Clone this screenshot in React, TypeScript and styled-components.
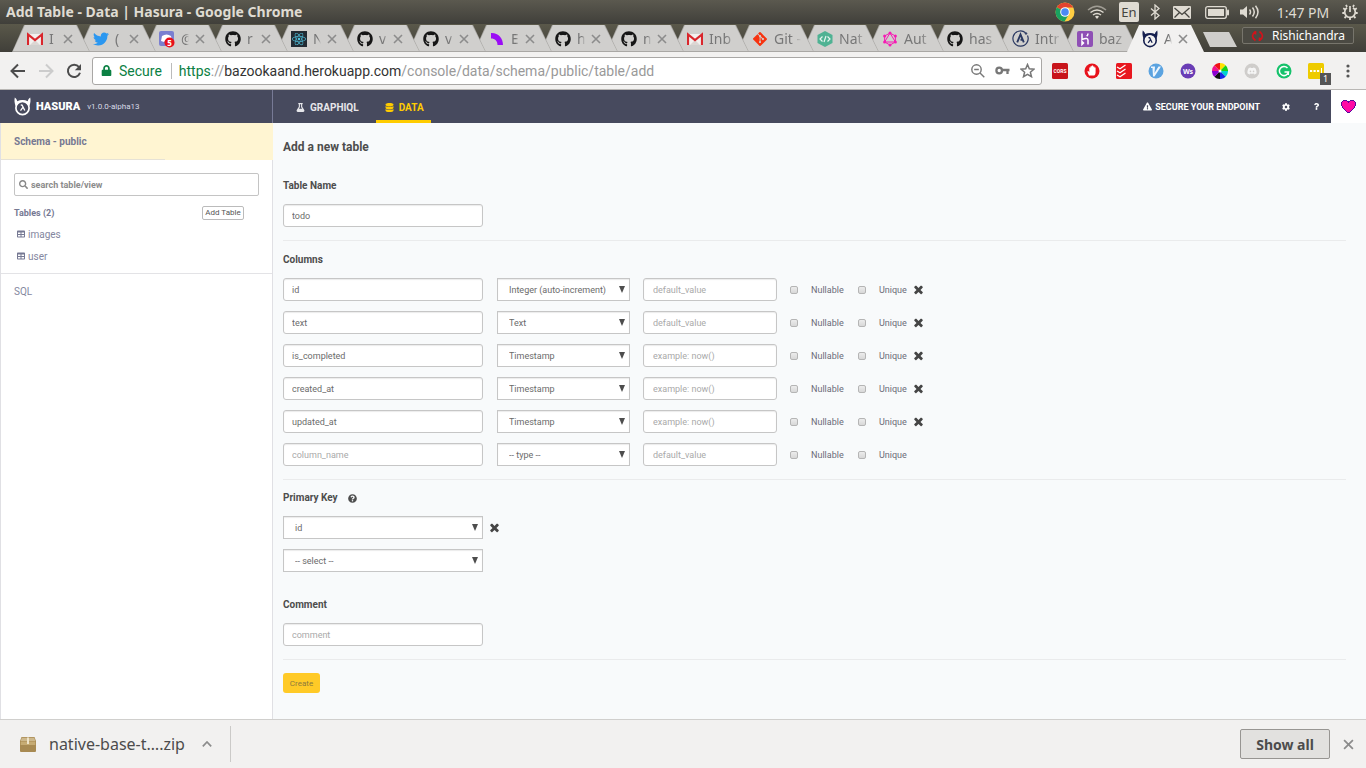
import React from "react";
import styled, { createGlobalStyle, css } from "styled-components";
import {
  FaCog,
  FaDatabase,
  FaDiscord,
  FaExclamationTriangle,
  FaFlask,
  FaGitAlt,
  FaGithub,
  FaLock,
  FaQuestion,
  FaQuestionCircle,
  FaReact,
  FaSearch,
  FaTable,
  FaTwitter,
} from "react-icons/fa";

const pageFont = `Roboto, "Noto Sans", sans-serif`;
const desktopFont = `"Noto Sans", "Open Sans", sans-serif`;

const GlobalStyle = createGlobalStyle`
  *, *::before, *::after { box-sizing: border-box; }
  body { margin: 0; font-family: ${pageFont}; color: #4d4d4d; background: #f8fafb; }
  button, input, select { font-family: inherit; margin: 0; }
  svg { display: block; flex: none; }
  h1, h2, p { margin: 0; }
`;

const Screen = styled.div`
  min-height: 100vh;
  display: flex;
  flex-direction: column;
`;

/* ---------- desktop title bar ---------- */

const TitleBar = styled.header`
  height: 24px;
  display: flex;
  align-items: center;
  padding: 0 7px 0 6px;
  background: linear-gradient(#5b594f, #403f3a);
  color: #dfdbd2;
  font-family: ${desktopFont};
`;

const WindowTitle = styled.p`
  flex: 1;
  font-size: 14px;
  font-weight: 700;
  line-height: 24px;
  white-space: nowrap;
`;

const TraySlot = styled.div<{ $w: number }>`
  width: ${(p) => p.$w}px;
  display: flex;
  justify-content: center;
  font-size: 14px;
  white-space: nowrap;
`;

const Language = styled.span`
  width: 20px;
  height: 20px;
  border-radius: 2px;
  background: #dfdbd2;
  color: #45443f;
  font-size: 13px;
  line-height: 20px;
  text-align: center;
`;

/* ---------- browser tabs ---------- */

const TabStrip = styled.nav`
  height: 28px;
  display: flex;
  align-items: flex-end;
  padding: 0 12px;
  background: linear-gradient(#5a584a, #403f39);
  font-family: ${desktopFont};
`;

const slanted = css`
  clip-path: polygon(0 100%, 12px 0, calc(100% - 13px) 0, 100% 100%);
`;

const TabShape = styled.div<{ $active?: boolean; $wide?: boolean; $order: number }>`
  ${slanted}
  position: relative;
  z-index: ${(p) => (p.$active ? 30 : 20 - p.$order)};
  flex: 0 1 ${(p) => (p.$wide ? 78 : 77)}px;
  min-width: 0;
  margin-right: -12px;
  height: 27px;
  display: flex;
  align-items: center;
  gap: 6px;
  padding: 0 12px 0 15px;
  background: ${(p) => (p.$active ? "#f2f1f0" : "#a9a7a4")};
  &::before {
    ${slanted}
    content: "";
    position: absolute;
    inset: 0 1px 1px 1px;
    z-index: -1;
    background: ${(p) => (p.$active ? "#f2f1f0" : "#d0cfcd")};
  }
`;

const TabName = styled.span<{ $short?: boolean }>`
  flex: ${(p) => (p.$short ? "0 0 8px" : "1 1 0")};
  min-width: 0;
  overflow: hidden;
  color: #777;
  font-size: 14px;
  line-height: 20px;
  white-space: nowrap;
  mask-image: linear-gradient(to right, #000 60%, transparent);
`;

const GhostButton = styled.button`
  display: flex;
  align-items: center;
  justify-content: center;
  padding: 0;
  border: 0;
  background: none;
  color: inherit;
`;

const NewTab = styled.button`
  width: 34px;
  height: 15px;
  margin: 0 0 5px 11px;
  padding: 0;
  border: 0;
  background: #cfcecb;
  clip-path: polygon(0 0, 26px 0, 100% 100%, 7px 100%);
`;

const Profile = styled.button`
  width: 112px;
  height: 17px;
  margin: 0 0 8px auto;
  display: flex;
  align-items: center;
  justify-content: space-between;
  padding: 0 8px;
  border: 1px solid #77756c;
  border-radius: 2px;
  background: #4b4a43;
  color: #fff;
  font-size: 12px;
  line-height: 15px;
`;

/* ---------- browser toolbar ---------- */

const Toolbar = styled.div`
  height: 38px;
  display: flex;
  align-items: center;
  padding: 0 2px 0 4px;
  border-bottom: 1px solid #b9b7b4;
  background: #f2f1f0;
  font-family: ${desktopFont};
`;

const ToolButton = styled(GhostButton)<{ $w: number; $color?: string }>`
  position: relative;
  width: ${(p) => p.$w}px;
  height: 28px;
  color: ${(p) => p.$color || "#4c4c4c"};
`;

const AddressBox = styled.div`
  flex: 1;
  height: 28px;
  margin: 0 2px 0 4px;
  display: flex;
  align-items: center;
  padding: 0 1px 0 8px;
  border: 1px solid #a9a7a5;
  border-radius: 3px;
  background: #fff;
  font-family: ${pageFont};
  font-size: 14px;
  white-space: nowrap;
`;

const Secure = styled.span`
  display: flex;
  align-items: center;
  gap: 7px;
  padding-right: 9px;
  margin-right: 7px;
  border-right: 1px solid #bbb;
  color: #0b8043;
  line-height: 16px;
`;

const Url = styled.span`
  flex: 1;
  color: #333;
  i { font-style: normal; color: #999; }
  b { font-weight: 400; color: #0b8043; }
`;

const CountBadge = styled.span`
  position: absolute;
  right: 1px;
  bottom: 0;
  width: 11px;
  height: 12px;
  background: #555;
  color: #fff;
  font-size: 9px;
  line-height: 12px;
`;

/* ---------- console header ---------- */

const ConsoleHeader = styled.header`
  height: 33px;
  display: flex;
  background: #474a5e;
  color: #fff;
`;

const Brand = styled.a`
  width: 273px;
  display: flex;
  align-items: center;
  padding-left: 14px;
  border-right: 1px solid #777a96;
  color: #fff;
  text-decoration: none;
`;

const BrandName = styled.span`
  margin: 0 7px 0 5px;
  font-size: 11px;
  font-weight: 900;
`;

const Version = styled.span`
  font-size: 8px;
  color: #d8dae6;
`;

const NavLinks = styled.nav`
  flex: 1;
  display: flex;
  gap: 10px;
  padding-left: 14px;
`;

const NavLink = styled.a<{ $active?: boolean }>`
  display: flex;
  align-items: center;
  gap: 5px;
  padding: 4px 7px 0 9px;
  border-bottom: 3px solid ${(p) => (p.$active ? "#fc0" : "transparent")};
  color: ${(p) => (p.$active ? "#fc0" : "#e6e6ea")};
  font-size: 10px;
  font-weight: 700;
  text-decoration: none;
`;

const HeaderAction = styled.a<{ $w?: number }>`
  ${(p) => p.$w && `width: ${p.$w}px;`}
  display: flex;
  align-items: center;
  justify-content: center;
  gap: 3px;
  padding-right: ${(p) => (p.$w ? 0 : 10)}px;
  color: #fff;
  font-size: 9px;
  font-weight: 700;
  text-decoration: none;
`;

const Love = styled(GhostButton)`
  width: 35px;
  background: #fff;
`;

/* ---------- sidebar ---------- */

const Body = styled.div`
  flex: 1;
  display: flex;
`;

const Sidebar = styled.aside`
  width: 273px;
  flex: none;
  border: solid #e0e0e4;
  border-width: 0 1px;
  background: #fff;
  color: #767993;
`;

const SchemaLink = styled.a`
  height: 37px;
  display: flex;
  align-items: center;
  padding-left: 13px;
  margin-right: -1px;
  background:
    linear-gradient(#e6e2d6, #e6e2d6) 0 100% / 164px 1px no-repeat,
    #fff5d2;
  color: inherit;
  font-size: 10px;
  font-weight: 700;
  text-decoration: none;
`;

const TableSection = styled.section`
  padding: 13px 13px 6px;
  border-bottom: 1px solid #e3e3e6;
`;

const SearchBox = styled.label`
  height: 23px;
  display: flex;
  align-items: center;
  gap: 3px;
  padding: 0 4px;
  border: 1px solid #c4c4c4;
  border-radius: 2px;
  color: #888;
`;

const SearchInput = styled.input`
  flex: 1;
  min-width: 0;
  padding: 0;
  border: 0;
  outline: 0;
  background: none;
  font-size: 9px;
  font-weight: 700;
  &::placeholder { color: #8b8b8b; }
`;

const TablesHead = styled.div`
  display: flex;
  align-items: center;
  justify-content: space-between;
  padding: 10px 15px 0 0;
  font-size: 9px;
  line-height: 12px;
  font-weight: 700;
`;

const AddTable = styled.button`
  height: 14px;
  width: 42px;
  padding: 0;
  border: 1px solid #bbb;
  border-radius: 2px;
  background: #fff;
  color: #555;
  font-size: 8px;
  line-height: 12px;
`;

const TableList = styled.ul`
  margin: 3px 0 0;
  padding: 0 0 0 3px;
  list-style: none;
`;

const TableLink = styled.a`
  height: 22px;
  display: flex;
  align-items: center;
  gap: 3px;
  color: #8487a0;
  font-size: 10px;
  text-decoration: none;
  svg { color: #767993; }
`;

const SqlLink = styled(TableLink)`
  height: 35px;
  padding-left: 13px;
`;

/* ---------- form ---------- */

const Main = styled.main`
  flex: 1;
  min-width: 0;
  padding: 16px 20px 26px 10px;
  background: #f8fafb;
`;

const PageTitle = styled.h1`
  font-size: 12px;
  line-height: 16px;
`;

const Label = styled.h2<{ $top: number }>`
  display: flex;
  align-items: center;
  gap: 10px;
  margin: ${(p) => p.$top}px 0 11px;
  font-size: 10px;
  line-height: 14px;
`;

const Rule = styled.hr`
  margin: 13px 0 0;
  border: 0;
  border-top: 1px solid #eaebec;
`;

const Rows = styled.div`
  display: flex;
  flex-direction: column;
  gap: 10px;
`;

const Row = styled.div`
  display: flex;
  align-items: center;
`;

const field = css`
  height: 23px;
  border: 1px solid #c6c6c6;
  background: #fff;
  box-shadow: inset 0 1px 1px #ececec;
  color: #6b6b6b;
  font-size: 9px;
`;

const TextInput = styled.input<{ $w: number }>`
  ${field}
  width: ${(p) => p.$w}px;
  padding: 0 8px;
  border-radius: 3px;
  &::placeholder { color: #a9a9a9; }
`;

const DefaultInput = styled(TextInput)`
  margin: 0 13px;
  padding: 0 9px;
`;

const SelectFrame = styled.span<{ $w: number }>`
  position: relative;
  width: ${(p) => p.$w}px;
  &::after {
    content: "";
    position: absolute;
    top: 8px;
    right: 5px;
    border: solid transparent;
    border-width: 7px 3px 0;
    border-top-color: #4d4d4d;
    pointer-events: none;
  }
`;

const TypeFrame = styled(SelectFrame)`
  margin-left: 14px;
`;

const Select = styled.select`
  ${field}
  display: block;
  width: 100%;
  padding: 0 11px;
  border-radius: 0;
  appearance: none;
`;

const Check = styled.label<{ $w: number }>`
  width: ${(p) => p.$w}px;
  display: flex;
  align-items: center;
  gap: 13px;
  color: #6b6b78;
  font-size: 9px;
  line-height: 14px;
`;

const Tick = styled.input`
  width: 8px;
  height: 8px;
  appearance: none;
  border: 1px solid #b5b5b5;
  border-radius: 2px;
  background: linear-gradient(#ececec, #d8d8d8);
`;

const RemoveKey = styled(GhostButton)`
  margin-left: 5px;
`;

const CreateButton = styled.button`
  height: 20px;
  width: 37px;
  margin-top: 13px;
  padding: 0;
  border: 0;
  border-radius: 3px;
  background: #ffca27;
  color: #8d7a3d;
  font-size: 8px;
`;

/* ---------- download shelf ---------- */

const Shelf = styled.footer`
  height: 49px;
  display: flex;
  align-items: center;
  padding: 0 12px 0 20px;
  border-top: 1px solid #d0cfcd;
  background: #f2f1f0;
  color: #4c4c4c;
  font-family: ${desktopFont};
`;

const Download = styled.div`
  height: 36px;
  width: 211px;
  display: flex;
  align-items: center;
  gap: 13px;
  border-right: 1px solid #cbcac8;
  font-size: 16px;
`;

const FileName = styled.span`
  flex: 0 0 140px;
  white-space: nowrap;
`;

const ShowAll = styled.button`
  height: 30px;
  width: 90px;
  margin: 0 13px 0 auto;
  border: 1px solid #979592;
  border-radius: 2px;
  background: #e2e1df;
  color: #4c4c4c;
  font-size: 14px;
  font-weight: 700;
`;

/* ---------- drawings ---------- */

const Cross = ({ size = 10, color = "#8c8c8c" }: { size?: number; color?: string }) => (
  <svg width={size} height={size} viewBox="0 0 10 10">
    <path d="M1 1l8 8M9 1L1 9" stroke={color} strokeWidth="1.6" />
  </svg>
);

const BoldCross = () => (
  <svg width="13" height="13" viewBox="0 0 1792 1792" fill="#454545">
    <path d="M1490 1322q0 40-28 68l-136 136q-28 28-68 28t-68-28l-294-294-294 294q-28 28-68 28t-68-28l-136-136q-28-28-28-68t28-68l294-294-294-294q-28-28-28-68t28-68l136-136q28-28 68-28t68 28l294 294 294-294q28-28 68-28t68 28l136 136q28 28 28 68t-28 68l-294 294 294 294q28 28 28 68z" />
  </svg>
);

const HasuraMark = ({ color, w = 17, h = 19 }: { color: string; w?: number; h?: number }) => (
  <svg width={w} height={h} viewBox="0 0 17 19" fill="none" stroke={color}>
    <circle cx="8.5" cy="11" r="6.6" strokeWidth="1.7" />
    <path d="M1.800 9.500C.4 6.500.2 3.200.8.6c1.300.9 2 2 2.500 3.600q2.200-1.200 5.200-1.200t5.200 1.200C14.200 2.600 14.900 1.500 16.200.6c.6 2.600.4 5.900-1 8.900L12.500 6.200Q8.500 3.800 4.500 6.200z" fill={color} stroke="none" />
    <path d="M6.800 8l1.300.1 2.700 5.400M8.900 10.400l-2.400 3.200" strokeWidth="1.300" />
  </svg>
);

const Gmail = () => (
  <svg width="16" height="16" viewBox="0 0 16 16">
    <path d="M1 3h14v11H1z" fill="#f3f0ee" />
    <path d="M3 14l5-5 5 5z" fill="#dcd6d3" />
    <path d="M1 14V3.500L8 9l7-5.500V14" fill="none" stroke="#d9262c" strokeWidth="2.200" />
  </svg>
);

const Discord = () => (
  <svg width="16" height="18" viewBox="0 0 16 18">
    <rect width="15" height="15" y="1" rx="2" fill="#7a7fd0" />
    <path d="M3 6q4.500-3 9 0l1 5-3 1-1-1H6l-1 1-3-1z" fill="#fff" />
    <circle cx="10.500" cy="12.500" r="5" fill="#e8101a" />
    <text x="10.500" y="15.500" textAnchor="middle" fontSize="8" fontWeight="700" fill="#fff">5</text>
  </svg>
);

const ReactTile = () => (
  <svg width="16" height="16" viewBox="0 0 16 16">
    <path d="M0 0h16v16H0z" fill="#222b33" />
    <FaReact x="1" y="1" size={14} color="#4fc0dc" />
  </svg>
);

const PurpleArc = () => (
  <svg width="16" height="16" viewBox="0 0 16 16">
    <path d="M2 2c7-.5 12 5 12 12H8.500c0-4-2.500-6.500-6.500-6.500z" fill="#9b0df5" />
  </svg>
);

const NativeBase = () => (
  <svg width="16" height="16" viewBox="0 0 16 16">
    <path d="M8 0l7.500 4v8L8 16 .5 12V4z" fill="#4fb293" />
    <path d="M5.500 5.500L3 8l2.500 2.500M10.500 5.500L13 8l-2.500 2.500M9 5l-2 6" fill="none" stroke="#e6f5ef" strokeWidth="1.200" />
  </svg>
);

const GraphQL = () => (
  <svg width="16" height="16" viewBox="0 0 16 16" fill="none" stroke="#f51bb4" strokeWidth="1">
    <path d="M8 2l5.400 3v6L8 14l-5.400-3V5zM8 2l5.400 9H2.600z" />
    <g fill="#f51bb4" stroke="none">
      <circle cx="8" cy="2" r="1.500" /><circle cx="13.400" cy="5" r="1.500" /><circle cx="13.400" cy="11" r="1.500" />
      <circle cx="8" cy="14" r="1.500" /><circle cx="2.600" cy="11" r="1.500" /><circle cx="2.600" cy="5" r="1.500" />
    </g>
  </svg>
);

const Apollo = () => (
  <svg width="17" height="17" viewBox="0 0 17 17" fill="none" stroke="#2a3861">
    <path d="M13.500 2.800A7.600 7.600 0 1 0 15.500 5.500" strokeWidth="1.200" />
    <path d="M5.200 12.300L8.500 4.500l3.300 7.800M8.500 9.800h2" strokeWidth="1.900" />
    <circle cx="14" cy="3.500" r=".8" fill="#2a3861" />
  </svg>
);

const Heroku = () => (
  <svg width="16" height="16" viewBox="0 0 16 16">
    <rect width="16" height="16" rx="2" fill="#8f50b5" />
    <path d="M5 2.500v6c4-1.800 6-1.300 6 .8v4.200M5 10.500v3l1.500-1.500zM11 2.500q0 1.500-1.300 2.800" fill="none" stroke="#fff" strokeWidth="1.500" />
  </svg>
);

const ChromeBall = () => (
  <svg width="20" height="20" viewBox="0 0 20 20">
    <circle cx="10" cy="10" r="9.500" fill="#ffcd42" />
    <path d="M10 10L1.800 5.200A9.500 9.500 0 0 1 18.200 5.500H10z" fill="#e2432f" />
    <path d="M10 10L1.800 5.200A9.500 9.500 0 0 0 9.500 19.500L13.500 13z" fill="#1aa260" />
    <circle cx="10" cy="10" r="4.800" fill="#fff" />
    <circle cx="10" cy="10" r="3.800" fill="#4a8af4" />
  </svg>
);

const Wifi = () => (
  <svg width="20" height="14" viewBox="0 0 20 14" fill="none" stroke="#dfdbd2" strokeWidth="1.500">
    <path d="M1 5q9-7.500 18 0" opacity=".55" /><path d="M3.500 7.500q6.500-5 13 0M6 10q4-3 8 0" />
    <path d="M8 11.500L10 14l2-2.500q-2-1.500-4 0z" fill="#dfdbd2" stroke="none" />
  </svg>
);

const Bluetooth = () => (
  <svg width="10" height="16" viewBox="0 0 10 16" fill="none" stroke="#dfdbd2" strokeWidth="1.300">
    <path d="M1 4.500l8 7L5 15V1l4 3.500-8 7" />
  </svg>
);

const Mail = () => (
  <svg width="18" height="13" viewBox="0 0 18 13">
    <rect width="18" height="13" rx="1" fill="#dfdbd2" />
    <path d="M1.500 2L9 8.500 16.500 2M1.500 11.500l5-5M16.500 11.500l-5-5" fill="none" stroke="#45443f" strokeWidth="1.300" />
  </svg>
);

const Battery = () => (
  <svg width="24" height="13" viewBox="0 0 24 13">
    <rect x=".7" y=".7" width="20.600" height="11.600" rx="2" fill="none" stroke="#dfdbd2" strokeWidth="1.300" />
    <rect x="3" y="3" width="16" height="7" fill="#dfdbd2" /><rect x="22" y="3.500" width="2" height="6" rx="1" fill="#dfdbd2" />
  </svg>
);

const Volume = () => (
  <svg width="20" height="14" viewBox="0 0 20 14" fill="none" stroke="#dfdbd2" strokeWidth="1.500">
    <path d="M0 4.500h3L7 1v12L3 9.500H0z" fill="#dfdbd2" stroke="none" />
    <path d="M9.500 4.500q2 2.500 0 5M12.500 2.500q3.500 4.500 0 9M15.500.8q5 6.200 0 12.400" />
  </svg>
);

const PowerGear = () => (
  <svg width="16" height="16" viewBox="0 0 16 16" fill="none" stroke="#dfdbd2">
    <path d="M5 3.700a5.300 5.300 0 1 0 6 0M8 2v6" strokeWidth="1.700" />
    <path d="M1.200 4.200l2 1.200M14.800 4.200l-2 1.200M.3 9h2M15.700 9h-2M2.500 14l1.500-1.500M13.500 14L12 12.500M8 16v-2M4 .8l1 2M12 .8l-1 2" strokeWidth="1.800" />
  </svg>
);

const Arrow = ({ flip }: { flip?: boolean }) => (
  <svg width="16" height="16" viewBox="0 0 16 16" fill="none" stroke="currentColor" strokeWidth="2">
    <path d={flip ? "M1 8h13M8 1.500L14.500 8 8 14.500" : "M15 8H2M8 1.500L1.500 8 8 14.500"} />
  </svg>
);

const Reload = () => (
  <svg width="16" height="16" viewBox="0 0 16 16" fill="none" stroke="currentColor" strokeWidth="2">
    <path d="M13 4A6.200 6.200 0 1 0 14 9.800" /><path d="M15 1v6.200H8.800z" fill="currentColor" stroke="none" />
  </svg>
);

const ZoomOut = () => (
  <svg width="14" height="14" viewBox="0 0 14 14" fill="none" stroke="currentColor" strokeWidth="1.400">
    <circle cx="5.500" cy="5.500" r="4.700" /><path d="M3.200 5.500h4.600M9 9l4.300 4.300" />
  </svg>
);

const Key = () => (
  <svg width="15" height="9" viewBox="0 0 15 9" fill="none" stroke="currentColor">
    <circle cx="4.200" cy="4.500" r="2.800" strokeWidth="2.300" /><path d="M7 4h7.500M12.500 4v4" strokeWidth="2.300" />
  </svg>
);

const Star = () => (
  <svg width="15" height="15" viewBox="0 0 15 15" fill="none" stroke="currentColor" strokeWidth="1.500">
    <path d="M7.500 1.500l1.800 4.300 4.600.4-3.500 3 1.100 4.500-4-2.400-4 2.400 1.100-4.500-3.500-3 4.600-.4z" />
  </svg>
);

const Tile = ({ color, children }: { color: string; children?: React.ReactNode }) => (
  <svg width="16" height="16" viewBox="0 0 16 16">
    <rect width="16" height="16" rx="1.500" fill={color} />
    {children}
  </svg>
);

const Disc = ({ color, children }: { color: string; children?: React.ReactNode }) => (
  <svg width="16" height="16" viewBox="0 0 16 16">
    <circle cx="8" cy="8" r="7.500" fill={color} />
    {children}
  </svg>
);

const wheel = ["#ffe100", "#19d219", "#00d2d2", "#1428e6", "#111", "#8c00d2", "#f0148c", "#f01414"];

const ColorWheel = () => (
  <svg width="16" height="16" viewBox="-8 -8 16 16">
    {wheel.map((c, i) => (
      <path key={c} d="M0 0V-8A8 8 0 0 1 5.700-5.700z" fill={c} transform={`rotate(${i * 45})`} />
    ))}
    <circle r="1.500" fill="#fff" />
  </svg>
);

const Heart = () => (
  <svg width="15" height="13" viewBox="0 0 15 13" shapeRendering="crispEdges">
    <path d="M2 0h4v1h3V0h4v1h1v1h1v4h-1v2h-1v1h-1v1h-1v1h-1v1H9v1H6v-1H5v-1H4v-1H3V9H2V8H1V6H0V2h1V1h1z" fill="#5a0a9c" />
    <path d="M2 1h4v1h1v1h1V2h1V1h4v1h1v4h-1v2h-1v1h-1v1h-1v1H9v1H6v-1H5v-1H4V9H3V8H2V6H1V2h1z" fill="#ff0aa5" />
  </svg>
);

const Package = () => (
  <svg width="16" height="15" viewBox="0 0 16 15">
    <path d="M1.500 0h13L16 4v10q0 1-1 1H1q-1 0-1-1V4z" fill="#a88a52" />
    <path d="M1.800.8h12.400L15.300 4H.7z" fill="#cdb88c" /><path d="M.7 4.500h14.600V8H.7z" fill="#c6ab73" />
    <path d="M7 .5h2V7H7z" fill="#eee3c9" />
  </svg>
);

const Caret = () => (
  <svg width="10" height="6" viewBox="0 0 10 6" fill="none" stroke="#8c8c8c" strokeWidth="1.700">
    <path d="M.8 5.300L5 1l4.200 4.300" />
  </svg>
);

/* ---------- data ---------- */

const octocat = <FaGithub size={16} color="#161616" />;

const tabs = [
  { icon: <Gmail />, name: "I", closable: true },
  { icon: <FaTwitter size={16} color="#2b97f0" />, name: "(", closable: true },
  { icon: <Discord />, name: "@", closable: true },
  { icon: octocat, name: "r", closable: true },
  { icon: <ReactTile />, name: "N", closable: true },
  { icon: octocat, name: "v", closable: true },
  { icon: octocat, name: "v", closable: true },
  { icon: <PurpleArc />, name: "E", closable: true },
  { icon: octocat, name: "h", closable: true },
  { icon: octocat, name: "n", closable: true },
  { icon: <Gmail />, name: "Inb" },
  { icon: <FaGitAlt size={16} color="#f7330f" />, name: "Git -" },
  { icon: <NativeBase />, name: "Nat" },
  { icon: <GraphQL />, name: "Aut" },
  { icon: octocat, name: "has" },
  { icon: <Apollo />, name: "Intr" },
  { icon: <Heroku />, name: "baz" },
  { icon: <HasuraMark color="#16204f" w={16} h={18} />, name: "A", closable: true, active: true },
];

const extensions = [
  { name: "CORS", icon: <Tile color="#c8141b"><text x="8" y="10" textAnchor="middle" fontFamily="Roboto" fontSize="5" fontWeight="700" fill="#fff">CORS</text></Tile> },
  { name: "Ad blocker", icon: <Disc color="#e8121c"><path d="M5 12.500L3.300 8.500l1-.5 1 1.300V4.500h1.200V3.300h1.300v-.8h1.300v1h1.300v1h1.200v5q0 2-1.300 3z" fill="#fff" /></Disc> },
  { name: "Todoist", icon: <Tile color="#e8171f"><path d="M1 4l3 1.800L9.500 2M1 8l3 1.800L9.500 6M1 12l3 1.800L9.500 10" fill="none" stroke="#fff" strokeWidth="1.200" /></Tile> },
  { name: "Vimium", icon: <Disc color="#5ba3e0"><path d="M3 3.500h4L6.500 10l4-6.500H13L6.500 13.500H5L4.500 5H3z" fill="#eef6fd" /></Disc> },
  { name: "Web scraper", icon: <Disc color="#6a3db5"><text x="8" y="11" textAnchor="middle" fontSize="7" fontWeight="700" fill="#fff">Ws</text></Disc> },
  { name: "Color picker", icon: <ColorWheel /> },
  { name: "Discord", icon: <Disc color="#cfcdcb"><FaDiscord x="3" y="3" size={10} color="#f5f5f5" /></Disc> },
  { name: "Grammar", icon: <Disc color="#15c26b"><path d="M11.500 5A4.600 4.600 0 1 0 12.500 9H8.500M12.300 8.500v3.500" fill="none" stroke="#fff" strokeWidth="1.500" /></Disc> },
  { name: "Notes", count: 1, icon: <Tile color="#eecb00"><path d="M2 7h2.200v2H2zM5.500 7h2.200v2H5.500zM9 7h2.200v2H9zM13 5h1v5h-1z" fill="#fff" /></Tile> },
];

const columns = [
  { name: "id", type: "Integer (auto-increment)", hint: "default_value" },
  { name: "text", type: "Text", hint: "default_value" },
  { name: "is_completed", type: "Timestamp", hint: "example: now()" },
  { name: "created_at", type: "Timestamp", hint: "example: now()" },
  { name: "updated_at", type: "Timestamp", hint: "example: now()" },
  { name: "", type: "-- type --", hint: "default_value" },
];

export default function App() {
  return (
    <Screen>
      <GlobalStyle />
      <TitleBar>
        <WindowTitle>Add Table - Data | Hasura - Google Chrome</WindowTitle>
        <TraySlot $w={32}><ChromeBall /></TraySlot>
        <TraySlot $w={32}><Wifi /></TraySlot>
        <TraySlot $w={32}><Language>En</Language></TraySlot>
        <TraySlot $w={20}><Bluetooth /></TraySlot>
        <TraySlot $w={34}><Mail /></TraySlot>
        <TraySlot $w={36}><Battery /></TraySlot>
        <TraySlot $w={30}><Volume /></TraySlot>
        <TraySlot $w={76}>1:47 PM</TraySlot>
        <TraySlot $w={18}><PowerGear /></TraySlot>
      </TitleBar>

      <TabStrip>
        {tabs.map((t, i) => (
          <TabShape key={i} $order={i} $active={t.active} $wide={i < 10}>
            {t.icon}
            <TabName $short={t.closable}>{t.name}</TabName>
            {t.closable && (
              <GhostButton aria-label="Close tab"><Cross size={10} /></GhostButton>
            )}
          </TabShape>
        ))}
        <NewTab aria-label="New tab" />
        <Profile>
          <svg width="13" height="12" viewBox="0 0 13 12" fill="none" stroke="#d3121a" strokeWidth="1.700">
            <path d="M4.500 1.500q-6 4.500 0 9M8.500 1.500q6 4.500 0 9M4.500 1v3.500M8.500 11V7.500" />
          </svg>
          Rishichandra
        </Profile>
      </TabStrip>

      <Toolbar>
        <ToolButton $w={28} aria-label="Back"><Arrow /></ToolButton>
        <ToolButton $w={28} $color="#ccc" aria-label="Forward"><Arrow flip /></ToolButton>
        <ToolButton $w={28} aria-label="Reload"><Reload /></ToolButton>
        <AddressBox>
          <Secure><FaLock size={11} />Secure</Secure>
          <Url><b>https</b><i>://</i>bazookaand.herokuapp.com<i>/console/data/schema/public/table/add</i></Url>
          <ToolButton $w={25} $color="#777" aria-label="Zoom"><ZoomOut /></ToolButton>
          <ToolButton $w={25} $color="#777" aria-label="Passwords"><Key /></ToolButton>
          <ToolButton $w={25} $color="#777" aria-label="Bookmark"><Star /></ToolButton>
        </AddressBox>
        {extensions.map((e) => (
          <ToolButton key={e.name} $w={32} aria-label={e.name}>
            {e.icon}
            {e.count && <CountBadge>{e.count}</CountBadge>}
          </ToolButton>
        ))}
        <ToolButton $w={32} aria-label="Menu">
          <svg width="4" height="14" viewBox="0 0 4 14" fill="#555">
            <circle cx="2" cy="2" r="1.600" /><circle cx="2" cy="7" r="1.600" /><circle cx="2" cy="12" r="1.600" />
          </svg>
        </ToolButton>
      </Toolbar>

      <ConsoleHeader>
        <Brand href="#home">
          <HasuraMark color="#fff" />
          <BrandName>HASURA</BrandName>
          <Version>v1.0.0-alpha13</Version>
        </Brand>
        <NavLinks>
          <NavLink href="#graphiql"><FaFlask size={9} />GRAPHIQL</NavLink>
          <NavLink href="#data" $active><FaDatabase size={9} />DATA</NavLink>
        </NavLinks>
        <HeaderAction href="#secure"><FaExclamationTriangle size={9} />SECURE YOUR ENDPOINT</HeaderAction>
        <HeaderAction href="#settings" $w={31} aria-label="Settings"><FaCog size={8} /></HeaderAction>
        <HeaderAction href="#help" $w={30} aria-label="Help"><FaQuestion size={7} /></HeaderAction>
        <Love aria-label="Love"><Heart /></Love>
      </ConsoleHeader>

      <Body>
        <Sidebar>
          <SchemaLink href="#schema">Schema - public</SchemaLink>
          <TableSection>
            <SearchBox>
              <FaSearch size={9} />
              <SearchInput placeholder="search table/view" aria-label="search table/view" />
            </SearchBox>
            <TablesHead>
              Tables (2)
              <AddTable>Add Table</AddTable>
            </TablesHead>
            <TableList>
              <li><TableLink href="#images"><FaTable size={8} />images</TableLink></li>
              <li><TableLink href="#user"><FaTable size={8} />user</TableLink></li>
            </TableList>
          </TableSection>
          <SqlLink href="#sql">SQL</SqlLink>
        </Sidebar>

        <Main>
          <PageTitle>Add a new table</PageTitle>
          <Label $top={24}>Table Name</Label>
          <Row><TextInput $w={200} defaultValue="todo" aria-label="Table Name" /></Row>
          <Rule />

          <Label $top={12}>Columns</Label>
          <Rows>
            {columns.map((c, i) => (
              <Row key={i}>
                <TextInput $w={200} defaultValue={c.name} placeholder="column_name" aria-label="Column name" />
                <TypeFrame $w={133}>
                  <Select aria-label="Column type"><option>{c.type}</option></Select>
                </TypeFrame>
                <DefaultInput $w={134} placeholder={c.hint} aria-label="Default value" />
                <Check $w={68}><Tick type="checkbox" />Nullable</Check>
                <Check $w={54}><Tick type="checkbox" />Unique</Check>
                {c.name && <GhostButton aria-label="Remove column"><BoldCross /></GhostButton>}
              </Row>
            ))}
          </Rows>
          <Rule />

          <Label $top={11}>Primary Key <FaQuestionCircle size={9} /></Label>
          <Rows>
            <Row>
              <SelectFrame $w={200}>
                <Select aria-label="Primary key column"><option>id</option></Select>
              </SelectFrame>
              <RemoveKey aria-label="Remove key"><BoldCross /></RemoveKey>
            </Row>
            <Row>
              <SelectFrame $w={200}>
                <Select aria-label="Add primary key column"><option>-- select --</option></Select>
              </SelectFrame>
            </Row>
          </Rows>

          <Label $top={26}>Comment</Label>
          <Row><TextInput $w={200} placeholder="comment" aria-label="Comment" /></Row>
          <Rule />
          <CreateButton>Create</CreateButton>
        </Main>
      </Body>

      <Shelf>
        <Download>
          <Package />
          <FileName>native-base-t….zip</FileName>
          <GhostButton aria-label="Download options"><Caret /></GhostButton>
        </Download>
        <ShowAll>Show all</ShowAll>
        <GhostButton aria-label="Close downloads"><Cross size={11} /></GhostButton>
      </Shelf>
    </Screen>
  );
}
